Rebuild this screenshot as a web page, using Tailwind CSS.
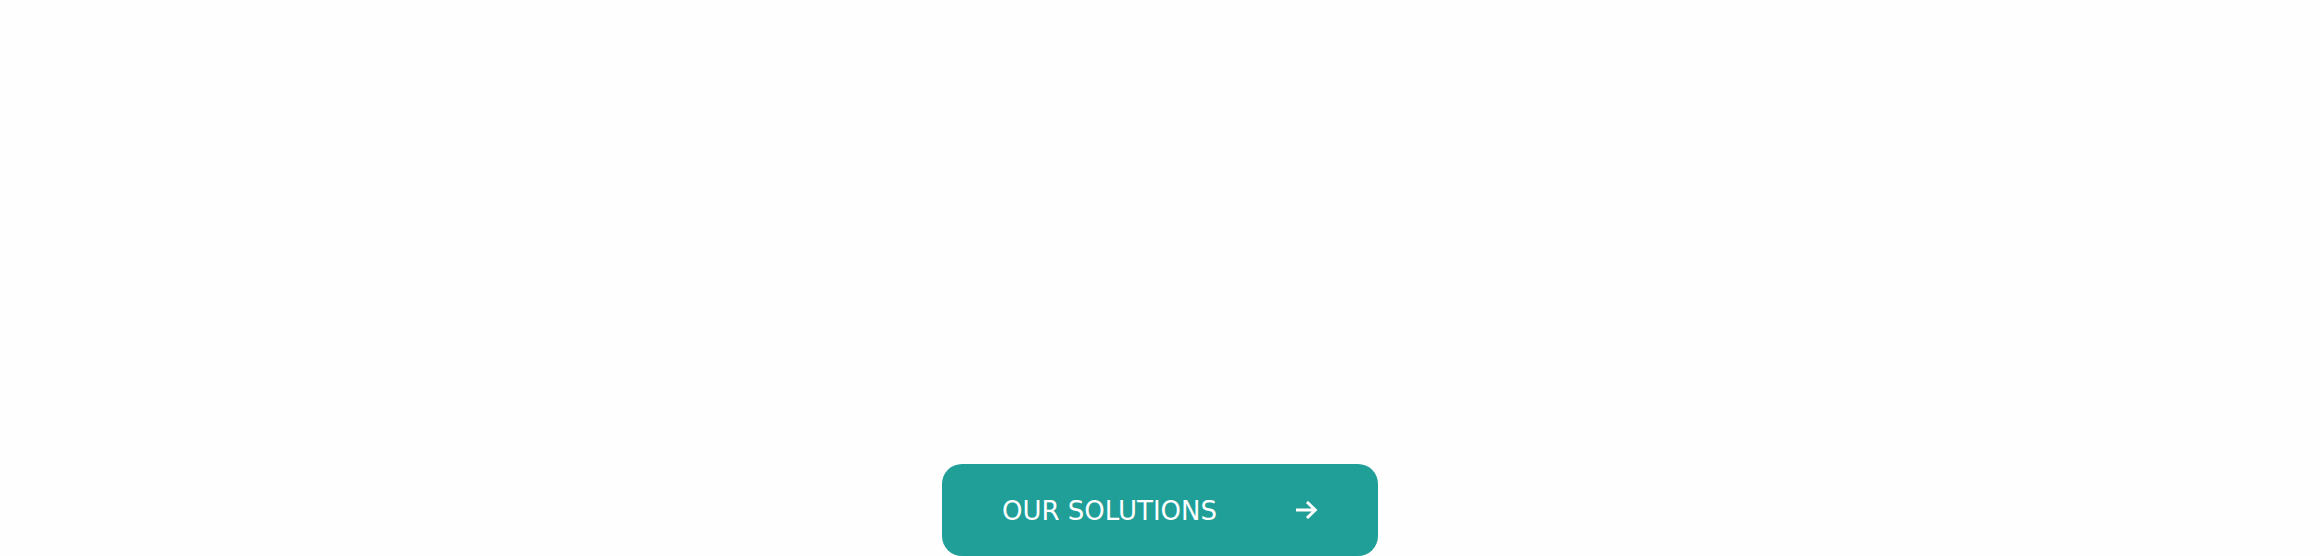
<!DOCTYPE html>
<html lang="en">
<head>
<meta charset="utf-8">
<meta name="viewport" content="width=device-width, initial-scale=1">
<title>Our Solutions</title>
<script src="https://cdn.jsdelivr.net/npm/@tailwindcss/browser@4"></script>
</head>
<body class="bg-[#fefefe]">
<main class="flex min-h-screen items-end justify-center">
  <a href="#solutions" class="flex w-[436px] items-center justify-between rounded-[20px] bg-[#209e98] px-15 pt-[29px] pb-[27px] font-['DejaVu_Sans',sans-serif] text-[26px] leading-9 whitespace-nowrap text-white">
    <span>OUR SOLUTIONS</span>
    <svg class="h-5 w-[22px]" viewBox="0 0 22 20" fill="none" stroke="currentColor" stroke-width="3" aria-hidden="true">
      <path d="M0 9H19M11 1L19.300 9L11 17"/>
    </svg>
  </a>
</main>
</body>
</html>
